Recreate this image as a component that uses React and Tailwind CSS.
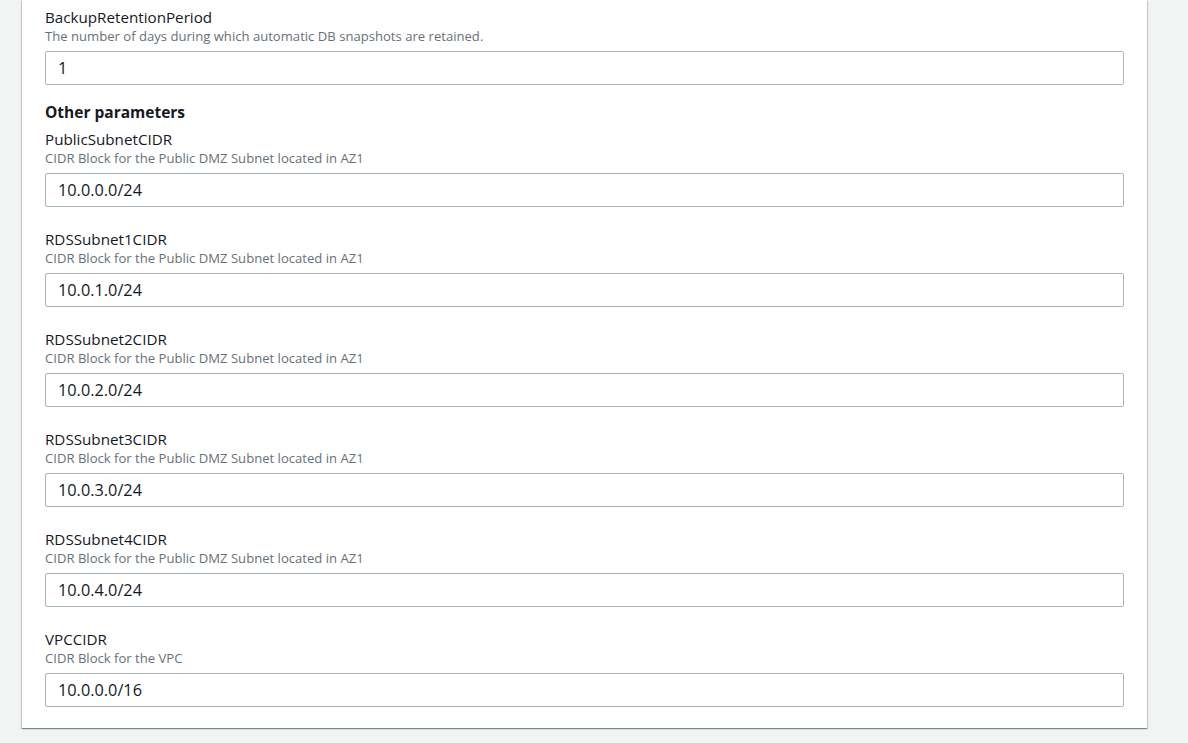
import React from "react";

const font = { fontFamily: '"Open Sans", "Noto Sans", Arial, sans-serif' };

const fields = [
  { name: "PublicSubnetCIDR", desc: "CIDR Block for the Public DMZ Subnet located in AZ1", value: "10.0.0.0/24" },
  { name: "RDSSubnet1CIDR", desc: "CIDR Block for the Public DMZ Subnet located in AZ1", value: "10.0.1.0/24" },
  { name: "RDSSubnet2CIDR", desc: "CIDR Block for the Public DMZ Subnet located in AZ1", value: "10.0.2.0/24" },
  { name: "RDSSubnet3CIDR", desc: "CIDR Block for the Public DMZ Subnet located in AZ1", value: "10.0.3.0/24" },
  { name: "RDSSubnet4CIDR", desc: "CIDR Block for the Public DMZ Subnet located in AZ1", value: "10.0.4.0/24" },
  { name: "VPCCIDR", desc: "CIDR Block for the VPC", value: "10.0.0.0/16" },
];

function Field({ name, desc, value, last }) {
  return (
    <div className={last ? "" : "mb-[22px]"}>
      <div className="text-[15.2px] leading-[20px] text-[#16191f]">{name}</div>
      <div className="text-[13.1px] leading-[18px] text-[#687078]">{desc}</div>
      <input
        readOnly
        value={value}
        className="mt-[6px] block h-[34px] w-full rounded-[2px] border border-[#aab7b8] bg-white px-[12px] text-[16.3px] text-[#16191f] outline-none"
        style={font}
      />
    </div>
  );
}

export default function App() {
  return (
    <div className="min-h-[743px] w-full bg-[#f2f3f3]" style={font}>
      <div className="flex">
        <div className="ml-[22px] w-[1125px] bg-white px-[23px] pb-[21px] pt-[7px] shadow-[0_1px_1px_0_rgba(0,28,36,0.3),1px_1px_1px_0_rgba(0,28,36,0.15),-1px_1px_1px_0_rgba(0,28,36,0.15)]">
          <Field
            name="BackupRetentionPeriod"
            desc="The number of days during which automatic DB snapshots are retained."
            value="1"
            last
          />
          <h2 className="mt-[15px] mb-[5px] text-[15.5px] font-bold leading-[24px] text-[#16191f]">
            Other parameters
          </h2>
          {fields.map((f, i) => (
            <Field key={f.name} {...f} last={i === fields.length - 1} />
          ))}
        </div>
      </div>
    </div>
  );
}
